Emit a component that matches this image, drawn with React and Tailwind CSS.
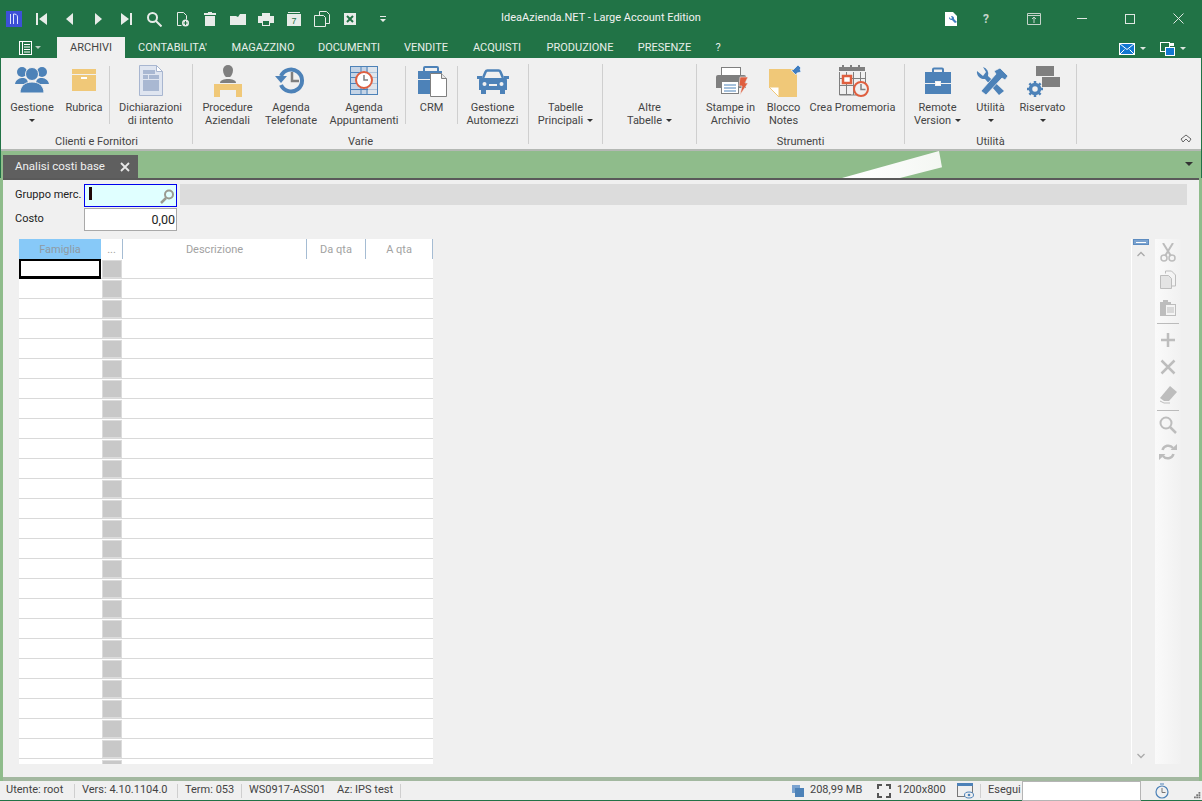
import React from 'react';

const B = '#4d82b8', T = '#f0c878', G = '#7f7f7f', R = '#df5f3f';

const S = ({ w = 16, h = 16, vb, children, className = '' }) => (
  <svg width={w} height={h} viewBox={vb || `0 0 ${w} ${h}`} className={`block shrink-0 ${className}`}>{children}</svg>
);

const IconPeople = () => (
  <S w={34} h={34}>
    <circle cx="7" cy="8" r="5" fill={B} /><circle cx="27" cy="8" r="5" fill={B} />
    <path d="M0 20c1-5 5-6 8-6s5 2 5 6zM34 20c-1-5-5-6-8-6s-5 2-5 6z" fill={B} />
    <circle cx="17" cy="10" r="6.500" fill={B} stroke="#f0f0f0" strokeWidth="1" />
    <path d="M5 29c0-8 6-11 12-11s12 3 12 11z" fill={B} stroke="#f0f0f0" strokeWidth="1" />
  </S>
);
const IconBox = () => (
  <S w={34} h={34}>
    <rect x="5" y="5" width="24" height="5" fill={T} /><rect x="5" y="11" width="24" height="16" fill={T} />
    <rect x="14" y="13" width="6" height="2" fill="#fff" />
  </S>
);
const IconDoc = () => (
  <S w={34} h={34}>
    <path d="M5.500 1.500h17l6 6v24h-23z" fill="#dfe5f0" stroke="#a8b6d0" />
    <path d="M22.500 1.500v6h6z" fill="#fff" stroke="#a8b6d0" />
    <rect x="9" y="6" width="12" height="4" fill="#a9b8d2" /><rect x="9" y="11" width="5" height="4" fill="#a9b8d2" />
    <rect x="15" y="11" width="10" height="4" fill="#a9b8d2" /><rect x="9" y="16" width="16" height="11" fill="#a9b8d2" />
  </S>
);
const IconDesk = () => (
  <S w={34} h={34}>
    <path d="M12 6a5 5 0 0 1 10 0c0 3-1.500 6-3 7h-4c-1.500-1-3-4-3-7z" fill={G} />
    <path d="M9 19c0-3 4-4 8-4s8 1 8 4z" fill={G} />
    <path d="M3 20h28v13h-6v-7H9v7H3z" fill={T} />
  </S>
);
const IconHistory = () => (
  <S w={34} h={34}>
    <path d="M7 12a11 11 0 1 1 0 9" fill="none" stroke={B} strokeWidth="4" />
    <path d="M1 12h12l-6 7z" fill={B} />
    <path d="M18 8v9h7" fill="none" stroke={G} strokeWidth="2.500" />
  </S>
);
const IconAppunt = () => (
  <S w={34} h={34}>
    <rect x="3.500" y="2.500" width="27" height="28" fill="#c5d4e6" stroke={B} />
    <path d="M3 8.500h28M3 13.500h28M3 19.500h28M3 25.500h28M14 2v29M20 2v29" stroke={B} fill="none" />
    <rect x="21" y="3" width="9" height="27" fill="#f0f0f0" opacity=".6" />
    <circle cx="17" cy="16" r="8" fill="#fff" stroke={R} strokeWidth="2" />
    <path d="M17 11v5h4" stroke={G} strokeWidth="1.500" fill="none" />
  </S>
);
const IconCrm = () => (
  <S w={34} h={34}>
    <path d="M9 7V4a1 1 0 0 1 1-1h12a1 1 0 0 1 1 1v3" fill="none" stroke={B} strokeWidth="2" />
    <rect x="3" y="7" width="24" height="8" fill={B} /><rect x="3" y="16" width="24" height="14" fill={B} />
    <path d="M15.500 9.500h11l5 5v18h-16z" fill="#fff" stroke={G} />
    <path d="M26.500 9.500v5h5" fill="#e6e6e6" stroke={G} />
  </S>
);
const IconCar = () => (
  <S w={34} h={34}>
    <path d="M7 14l2.500-6c.4-1 1-1.500 2-1.500h11c1 0 1.600.5 2 1.500l2.500 6" fill="none" stroke={B} strokeWidth="2.500" />
    <path d="M5 14h24c1 0 2 1 2 2v10H3V16c0-1 1-2 2-2z" fill={B} />
    <rect x="1" y="12" width="5" height="3" fill={B} /><rect x="28" y="12" width="5" height="3" fill={B} />
    <rect x="5" y="26" width="5" height="4" fill={B} /><rect x="24" y="26" width="5" height="4" fill={B} />
    <circle cx="8.500" cy="20" r="2" fill="#f0f0f0" /><circle cx="25.500" cy="20" r="2" fill="#f0f0f0" />
    <rect x="13" y="20" width="8" height="2" fill="#f0f0f0" />
  </S>
);
const IconPrinter = () => (
  <S w={34} h={34}>
    <rect x="7.500" y="3.500" width="19" height="8" fill="#fff" stroke={G} />
    <path d="M4 11h26a2 2 0 0 1 2 2v11H2V13a2 2 0 0 1 2-2z" fill={G} />
    <rect x="7.500" y="17.500" width="17" height="12" fill="#fff" stroke={G} />
    <path d="M10 21h12M10 24h12M10 27h12" stroke={B} />
    <path d="M26 13h8l-3 6h3l-8 12 2-9h-3z" fill={R} stroke="#f0f0f0" strokeWidth=".6" />
  </S>
);
const IconNote = () => (
  <S w={34} h={34}>
    <path d="M2 5h28v28H12L2 23z" fill={T} />
    <path d="M2 23h10v10z" fill="#fff" stroke={T} />
    <path d="M26 6l5-5 3 3-1 1 1 3-4 1-1 2-5-5z" fill="#3f7dc0" stroke="#fff" strokeWidth=".6" />
  </S>
);
const IconCal = () => (
  <S w={34} h={34}>
    <rect x="3" y="3" width="26" height="4" fill={G} />
    <path d="M7 1v5M15 1v5M23 1v5" stroke={G} strokeWidth="2" />
    <path d="M3.500 8v23h26V8M10.500 8v23M17.500 8v23M24.500 8v12M3 14.500h26M3 21.500h26M3 30.500h12" fill="none" stroke={G} />
    <rect x="7" y="12" width="8" height="7" fill="#fff" stroke={R} strokeWidth="2.500" />
    <circle cx="25" cy="25" r="7" fill="#f0f0f0" stroke={R} strokeWidth="2" />
    <path d="M25 20v5.500h4.500" fill="none" stroke={G} strokeWidth="1.500" />
  </S>
);
const IconCase = () => (
  <S w={34} h={34}>
    <path d="M12 9V5.500a1 1 0 0 1 1-1h8a1 1 0 0 1 1 1V9" fill="none" stroke={B} strokeWidth="2" />
    <path d="M4 8h26v11H20v-2h-6v2H4z" fill={B} />
    <path d="M4 20h10v2h6v-2h10v10H4z" fill={B} />
    <rect x="15" y="18" width="4" height="3" fill="#fff" />
  </S>
);
const IconTools = () => (
  <S w={34} h={34}>
    <path d="M3 7a7 7 0 0 0 8 8l14 16 5-4-16-15A7 7 0 0 0 9 3l3 5-3 4z" fill={B} />
    <path d="M7 27L22 10l-2-3 6-3 8 8-3 4-3-2L12 31z" fill={B} stroke="#f0f0f0" strokeWidth=".8" />
  </S>
);
const IconRis = () => (
  <S w={34} h={34}>
    <rect x="10" y="2" width="18" height="10" fill={G} /><rect x="16" y="13" width="18" height="10" fill={G} />
    <g transform="translate(9 25)">
      <circle r="4.500" fill="none" stroke={B} strokeWidth="3.500" />
      <path d="M0-8V8M-8 0H8M-5.600-5.600L5.600 5.600M-5.600 5.600L5.600-5.600" stroke={B} strokeWidth="2.500" strokeDasharray="3 10 3" />
    </g>
  </S>
);

const QAT = () => {
  const W = '#e8ece9';
  const items = [
    [<path d="M2 2h2v12H2zM13 2v12L5 8z" fill={W} />],
    [<path d="M11 2v12L4 8z" fill={W} />],
    [<path d="M5 2v12l7-6z" fill={W} />],
    [<path d="M14 2h-2v12h2zM3 2v12l8-6z" fill={W} />],
    [<g fill="none" stroke={W} strokeWidth="2"><circle cx="6.500" cy="6.500" r="4.500" /><path d="M10 10l5.500 5.500" /></g>],
    [<g><path d="M3.500 1.500h6l3 3v4M3.500 1.500v13h4" fill="none" stroke={W} /><circle cx="11.500" cy="12" r="3.500" fill={W} /><path d="M9.500 12h4M11.500 10v4" stroke="#217346" /></g>],
    [<path d="M6 1h4v1h4v2H2V2h4zM3 5h10v10H3z" fill={W} />],
    [<path d="M0 5h6l2 1 2-3h6v11H0z" fill={W} />],
    [<g><path d="M4 2h8v3H4zM0 5h16v7h-4V9H4v3H0z" fill={W} /><rect x="4.500" y="9.500" width="7" height="5" fill="none" stroke={W} /></g>],
    [<g><path d="M2 1.500h12" stroke={W} /><rect x="1" y="3" width="14" height="12" fill={W} /><text x="8" y="13" fontSize="9" textAnchor="middle" fill="#217346" fontFamily="Liberation Sans">7</text></g>],
    [<g fill="none" stroke={W}><path d="M.5 4.500h9l2 2v9H.5zM5.500 4V.5h7l3 3v9H12" /></g>],
    [<g><rect x="2" y="2" width="12" height="12" fill={W} /><path d="M5 5l6 6M11 5l-6 6" stroke="#217346" strokeWidth="2" /></g>],
  ];
  return (
    <div className="flex items-center pl-[6px] h-[37px]">
      <div className="w-[16px] h-[16px] bg-[#3d50d8] flex items-center justify-center mr-[12px]">
        <S w={10} h={12}><path d="M1.500 1v10M4.500 1v10M4.500 1c2 0 4 .5 4 3v7" fill="none" stroke="#dfe5ff" /></S>
      </div>
      <div className="flex items-center">
        {items.map(([p], i) => (
          <div key={i} className={i === 0 ? '' : 'ml-[12px]'}><S>{p}</S></div>
        ))}
        <div className="ml-[20px]"><S w={10} h={10}><path d="M2 2h6v1H2zM2 5h6L5 8z" fill={W} /></S></div>
      </div>
    </div>
  );
};

const TABS = [
  ['ARCHIVI', 68, 1], ["CONTABILITA'", 95], ['MAGAZZINO', 86], ['DOCUMENTI', 86], ['VENDITE', 68], ['ACQUISTI', 74], ['PRODUZIONE', 92], ['PRESENZE', 77], ['?', 30],
];

const Arrow = () => <span className="inline-block w-0 h-0 border-x-[3px] border-x-transparent border-t-[3px] border-t-[#333] align-middle" />;

const Item = ({ w, icon, l1, l2, arrow }) => (
  <div className="flex flex-col items-center shrink-0" style={{ width: w }}>
    <div className="h-[34px] mb-[3px]">{icon}</div>
    <div className="text-[11px] leading-[13px] text-center text-[#444] whitespace-nowrap">{l1 || '\u00a0'}</div>
    <div className="text-[11px] leading-[13px] text-center text-[#444] whitespace-nowrap h-[13px] flex items-center justify-center gap-[4px]">
      {l2}{arrow && <Arrow />}
    </div>
  </div>
);

const Sep = () => <div className="w-px h-[58px] bg-[#cfcfcf] mt-[2px] shrink-0" />;

const Group = ({ w, label, children }) => (
  <div className="flex shrink-0 h-[80px] border-r border-[#cfcfcf] mt-[6px]" style={{ width: w }}>
    <div className="flex flex-col w-full">
      <div className="flex h-[71px] shrink-0">{children}</div>
      <div className="text-[11px] leading-[13px] text-center text-[#444] whitespace-nowrap shrink-0">{label || '\u00a0'}</div>
    </div>
  </div>
);

const Ribbon = () => (
  <div className="h-[93px] ml-px mr-px bg-[#f0f0f0] border-b-2 border-[#b4b8b4] flex relative">
    <Group w={192} label="Clienti e Fornitori">
      <div className="w-[4px]" />
      <Item w={54} icon={<IconPeople />} l1="Gestione" arrow />
      <Item w={50} icon={<IconBox />} l1="Rubrica" />
      <Sep />
      <Item w={81} icon={<IconDoc />} l1="Dichiarazioni" l2="di intento" />
    </Group>
    <Group w={336} label="Varie">
      <div className="w-[3px]" />
      <Item w={63} icon={<IconDesk />} l1="Procedure" l2="Aziendali" />
      <Item w={64} icon={<IconHistory />} l1="Agenda" l2="Telefonate" />
      <Item w={82} icon={<IconAppunt />} l1="Agenda" l2="Appuntamenti" />
      <Sep />
      <Item w={51} icon={<IconCrm />} l1="CRM" />
      <Sep />
      <Item w={69} icon={<IconCar />} l1="Gestione" l2="Automezzi" />
    </Group>
    <Group w={74}>
      <div className="w-full flex justify-center"><Item w={70} icon={null} l1="Tabelle" l2="Principali" arrow /></div>
    </Group>
    <Group w={94}>
      <div className="w-full flex justify-center"><Item w={70} icon={null} l1="Altre" l2="Tabelle" arrow /></div>
    </Group>
    <Group w={208} label="Strumenti">
      <Item w={67} icon={<IconPrinter />} l1="Stampe in" l2="Archivio" />
      <Item w={39} icon={<IconNote />} l1="Blocco" l2="Notes" />
      <Item w={99} icon={<IconCal />} l1="Crea Promemoria" />
    </Group>
    <Group w={172} label="Utilità">
      <Item w={65} icon={<IconCase />} l1="Remote" l2="Version" arrow />
      <Item w={41} icon={<IconTools />} l1="Utilità" arrow />
      <Item w={63} icon={<IconRis />} l1="Riservato" arrow />
    </Group>
    <div className="absolute left-[1178px] top-[75px]">
      <S w={14} h={12}><path d="M2 6l5-4 5 4-2 3-3-3-3 3z" fill="none" stroke="#666" /></S>
    </div>
  </div>
);

const SideTool = ({ children }) => <div className="h-[27px] flex items-center justify-center"><S w={20} h={20}>{children}</S></div>;

const SideBar = () => {
  const c = '#bdbdbd';
  return (
    <div className="w-[26px] h-[525px] bg-gradient-to-r from-[#fafafa] to-[#f1f1f1] flex flex-col">
      <SideTool>
        <circle cx="6" cy="15" r="3" fill="none" stroke={c} strokeWidth="1.500" /><circle cx="14" cy="15" r="3" fill="none" stroke={c} strokeWidth="1.500" />
        <path d="M7 13L15 0M13 13L5 0" stroke={c} strokeWidth="2" />
      </SideTool>
      <SideTool>
        <path d="M7.500 3.500V1h6l4 4v11h-4" fill="none" stroke={c} /><path d="M2.500 5.500h8l3 3v10h-11z" fill="#e4e4e4" stroke={c} />
      </SideTool>
      <SideTool>
        <path d="M2 5h3V3h5v2h3v14H2z" fill={c} /><rect x="7.500" y="7.500" width="10" height="11" fill="#f4f4f4" stroke={c} />
        <path d="M9 11h7M9 13h7M9 15h7" stroke={c} />
      </SideTool>
      <div className="h-px bg-[#bbb] mx-[2px] mt-[3px] mb-[2px]" />
      <SideTool><path d="M10 3v14M3 10h14" stroke={c} strokeWidth="2.500" /></SideTool>
      <SideTool><path d="M3.500 3.500l13 13M16.500 3.500l-13 13" stroke={c} strokeWidth="2.500" /></SideTool>
      <SideTool><path d="M12 2l7 6-8 9H6l-4-3z" fill={c} /><path d="M2 17l4 2h6" stroke={c} fill="none" /></SideTool>
      <div className="h-px bg-[#bbb] mx-[2px] mt-[3px]" />
      <SideTool><circle cx="8" cy="8" r="5.500" fill="none" stroke={c} strokeWidth="2" /><path d="M12 12l6 6" stroke={c} strokeWidth="2.500" /></SideTool>
      <SideTool>
        <path d="M4.500 8a6 6 0 0 1 10.500-2M15.500 12a6 6 0 0 1-10.500 2" fill="none" stroke={c} strokeWidth="2.500" />
        <path d="M12.500 8H19V2zM7.500 12H1v6z" fill={c} />
      </SideTool>
    </div>
  );
};

const Grid = () => (
  <div className="w-[414px] h-[525px] overflow-hidden shrink-0">
    <div className="flex h-[20px] bg-white text-[11px] leading-[21px] text-[#a2a2a2] text-center">
      <div className="w-[82px] bg-[#87c9f8] text-[#8f9aa3]">Famiglia</div>
      <div className="w-[22px] border-r border-[#a5bcd3]">...</div>
      <div className="w-[184px] border-r border-[#a5bcd3]">Descrizione</div>
      <div className="w-[59px] border-r border-[#a5bcd3]">Da qta</div>
      <div className="w-[67px] border-r border-[#a5bcd3]">A qta</div>
    </div>
    {Array.from({ length: 26 }).map((_, i) => (
      <div key={i} className="flex h-[20px] bg-white border-b border-[#d9d9d9]">
        <div className={`w-[82px] h-[20px] ${i === 0 ? 'border-[2px] border-b-[3px] border-black' : ''}`} />
        <div className="w-[22px] h-[19px] px-px pt-px"><div className="h-[18px] bg-[#c8c8c8] border border-[#dcdcdc]" /></div>
      </div>
    ))}
  </div>
);

const Sb = () => <div className="w-px h-[14px] bg-[#cfcfcf]" />;

const Status = () => (
  <div className="h-[20px] bg-[#f0f0f0] border-b border-[#217346] flex items-center text-[11px] text-[#444] whitespace-nowrap">
    <div className="w-[74px] pl-[6px]">Utente: root</div><Sb />
    <div className="w-[102px] pl-[7px]">Vers: 4.10.1104.0</div><Sb />
    <div className="w-[63px] pl-[7px]">Term: 053</div><Sb />
    <div className="w-[158px] pl-[7px] flex"><span className="w-[88px]">WS0917-ASS01</span><span>Az: IPS test</span></div><Sb />
    <div className="flex-1" />
    <S w={12} h={12} className="mr-[6px]"><rect x="0" y="0" width="8" height="8" fill="#7ba3d0" /><rect x="3" y="3" width="9" height="9" fill="#4d82b8" /></S>
    <div className="w-[67px]">208,99 MB</div>
    <S w={14} h={14} className="mr-[6px]"><path d="M1 5V1h4M9 1h4v4M13 9v4H9M5 13H1V9" fill="none" stroke="#555" strokeWidth="2" /></S>
    <div className="w-[60px]">1200x800</div>
    <S w={17} h={17} className="mr-[6px]"><rect x=".5" y="1.500" width="15" height="13" fill="none" stroke="#777" /><rect x="0" y="1" width="16" height="3" fill="#4d82b8" /><ellipse cx="12" cy="13" rx="4.500" ry="3" fill="#f0f0f0" stroke="#4d82b8" /><circle cx="12" cy="13" r="1.300" fill="#4d82b8" /></S>
    <Sb />
    <div className="ml-[7px] mr-[3px] w-[31px]">Esegui</div>
    <div className="w-[119px] h-[20px] bg-white border border-[#b5b5b5]" />
    <div className="w-[53px] pl-[13px]">
      <S w={16} h={16}><circle cx="8" cy="9" r="6" fill="none" stroke="#4d82b8" strokeWidth="1.200" /><path d="M8 5v4.500h3.500" fill="none" stroke="#777" /><path d="M6 1h4" stroke="#4d82b8" /></S>
    </div>
    <div className="w-[7px] self-end mb-[1px]">
      <S w={7} h={7}><path d="M5 0h2v2H5zM2.500 2.500h2v2h-2zM5 2.500h2v2H5zM0 5h2v2H0zM2.500 5h2v2h-2zM5 5h2v2H5z" fill="#777" transform="scale(.9)" /></S>
    </div>
    <div className="w-[1px]" />
  </div>
);

export default function App() {
  return (
    <div className="w-[1202px] h-[801px] bg-[#217346] flex flex-col overflow-hidden text-[#444]" style={{ fontFamily: 'Roboto, "Open Sans", sans-serif' }}>
      <div className="grid grid-cols-[1fr_auto_1fr] h-[37px] items-center">
        <QAT />
        <div className="text-[11px] text-[#f2f2f2] whitespace-nowrap">IdeaAzienda.NET - Large Account Edition</div>
        <div className="flex items-center justify-end h-full">
          <S w={14} h={16} className="mr-[17px]"><path d="M1 1h8l4 4v10H1z" fill="#fff" /><path d="M5 6a2.500 2.500 0 0 0 3 3l3 3 2-1-3-3a2.500 2.500 0 0 0-3-3l1 2-1 1z" fill="#3f7dc0" /></S>
          <div className="w-[22px] text-center text-[12px] font-bold text-[#c5d3ca] mr-[30px]">?</div>
          <S w={14} h={12} className="mr-[36px]"><path d="M.5 .5h13v11H.5zM.5 2.500h13M7 10V4M5 6l2-2 2 2" fill="none" stroke="#c5d3ca" /></S>
          <S w={10} h={2} className="mr-[38px]"><rect width="10" height="1" fill="#dfe7e2" /></S>
          <S w={10} h={10} className="mr-[38px]"><rect x=".5" y=".5" width="9" height="9" fill="none" stroke="#dfe7e2" /></S>
          <S w={11} h={11} className="mr-[18px]"><path d="M.5 .5l10 10M10.500 .5l-10 10" stroke="#dfe7e2" /></S>
        </div>
      </div>

      <div className="h-[21px] flex items-stretch text-[11px] text-[#e8efe9]">
        <div className="w-[57px] flex items-center pl-[19px] gap-[1px]">
          <S w={13} h={14}><rect x=".5" y=".5" width="12" height="13" fill="none" stroke="#fff" /><path d="M3.500 1v12M5 3.500h6M5 6h6M5 8.500h6M5 11h6" stroke="#fff" /></S>
          <span className="ml-[2px] w-0 h-0 border-x-[3px] border-x-transparent border-t-[3px] border-t-[#b8c9be]" />
        </div>
        {TABS.map(([t, w, a]) => (
          <div key={t} className={`flex items-center justify-center pt-[2px] shrink-0 whitespace-nowrap ${a ? 'bg-[#f0f0f0] text-[#444]' : ''}`} style={{ width: w }}>{t}</div>
        ))}
        <div className="flex-1" />
        <div className="flex items-center gap-[5px] pr-[16px] pt-[2px]">
          <S w={16} h={12}><rect width="16" height="12" fill="#1277d1" /><path d="M.5 .5l7.500 6 7.500-6M.5 11.500l5-5M15.500 11.500l-5-5" fill="none" stroke="#fff" /><rect x=".5" y=".5" width="15" height="11" fill="none" stroke="#fff" /></S>
          <span className="w-0 h-0 border-x-[3px] border-x-transparent border-t-[3px] border-t-[#dce6df]" />
          <S w={15} h={14} className="ml-[9px]"><rect x=".5" y=".5" width="9" height="9" fill="#217346" stroke="#fff" /><rect x="5.500" y="5.500" width="9" height="8" fill="#1277d1" stroke="#fff" /><rect x="9" y="1" width="5" height="3" fill="#fff" /></S>
          <span className="w-0 h-0 border-x-[3px] border-x-transparent border-t-[3px] border-t-[#dce6df]" />
        </div>
      </div>

      <Ribbon />

      <div className="h-[27px] ml-px mr-px bg-[#8fbc8b] flex items-end relative pl-[2px] shrink-0">
        <div className="w-[135px] h-[23px] bg-[#5f5f5f] text-[#f0f0f0] text-[11.500px] flex items-center pl-[12px] justify-between pr-[8px]">
          <span>Analisi costi base</span>
          <S w={10} h={10}><path d="M1 1l8 8M9 1L1 9" stroke="#e8e8e8" strokeWidth="1.800" /></S>
        </div>
        <div className="absolute left-[841px] top-0 w-[100px] h-[27px] bg-gradient-to-r from-white to-[#f4f7f3] [clip-path:polygon(0_100%,97%_0,100%_60%,58%_100%)]" />
        <div className="absolute right-[8px] top-[11px] w-0 h-0 border-x-[4px] border-x-transparent border-t-[4px] border-t-[#333]" />
      </div>

      <div className="flex-1 bg-[#8fbc8b] pl-[3px] pr-[3px] flex flex-col min-h-0">
        <div className="flex-1 min-h-0 bg-[#f0f0f0] border-t-2 border-[#5a5a5a] flex flex-col pt-[4px] pl-[1px]">
          <div className="flex ml-[11px] mr-[12px] h-[23px] items-start">
            <div className="w-[69px] h-[23px] flex items-center text-[11px] text-[#222] whitespace-nowrap">Gruppo merc.</div>
            <div className="w-[93px] h-[23px] bg-[#e0ffff] border border-[#0000ee] flex justify-between items-start pl-[4px] pr-[2px] pt-[2px]">
              <div className="w-[3px] h-[13px] bg-[#200808]" />
              <S w={14} h={15} className="mt-[2px]"><circle cx="9" cy="5.500" r="4" fill="none" stroke="#9a9a90" strokeWidth="2" /><path d="M6 9l-5 5" stroke="#9a9a90" strokeWidth="2.500" /></S>
            </div>
            <div className="ml-[3px] flex-1 h-[21px] bg-[#dcdcdc]" />
          </div>
          <div className="flex ml-[11px] mt-px h-[23px] items-center">
            <div className="w-[69px] text-[11px] text-[#222]">Costo</div>
            <div className="w-[93px] h-[23px] bg-white border border-[#a9a9a9] text-right text-[12.500px] leading-[21px] pr-px text-[#222]">0,00</div>
          </div>
          <div className="flex flex-1 mt-[8px] ml-[15px] min-h-0">
            <Grid />
            <div className="flex-1" />
            <div className="w-[18px] h-[525px] border-l border-white flex flex-col items-center">
              <div className="w-[16px] h-[6px] bg-[#7ba3d0] border border-[#5d8cc0] flex items-center justify-center"><div className="w-[10px] h-px bg-white" /></div>
              <div className="mt-[6px]"><S w={8} h={6}><path d="M.5 5L4 1.500 7.500 5" fill="none" stroke="#aaa" strokeWidth="1.300" /></S></div>
              <div className="flex-1" />
              <div className="mb-[5px]"><S w={8} h={6}><path d="M.5 1L4 4.500 7.500 1" fill="none" stroke="#aaa" strokeWidth="1.300" /></S></div>
            </div>
            <div className="w-[6px]" />
            <SideBar />
            <div className="w-[18px]" />
          </div>
          <div className="h-px" />
        </div>
        <div className="h-[4px] bg-[#a3b8a0]" />
      </div>

      <Status />
    </div>
  );
}
